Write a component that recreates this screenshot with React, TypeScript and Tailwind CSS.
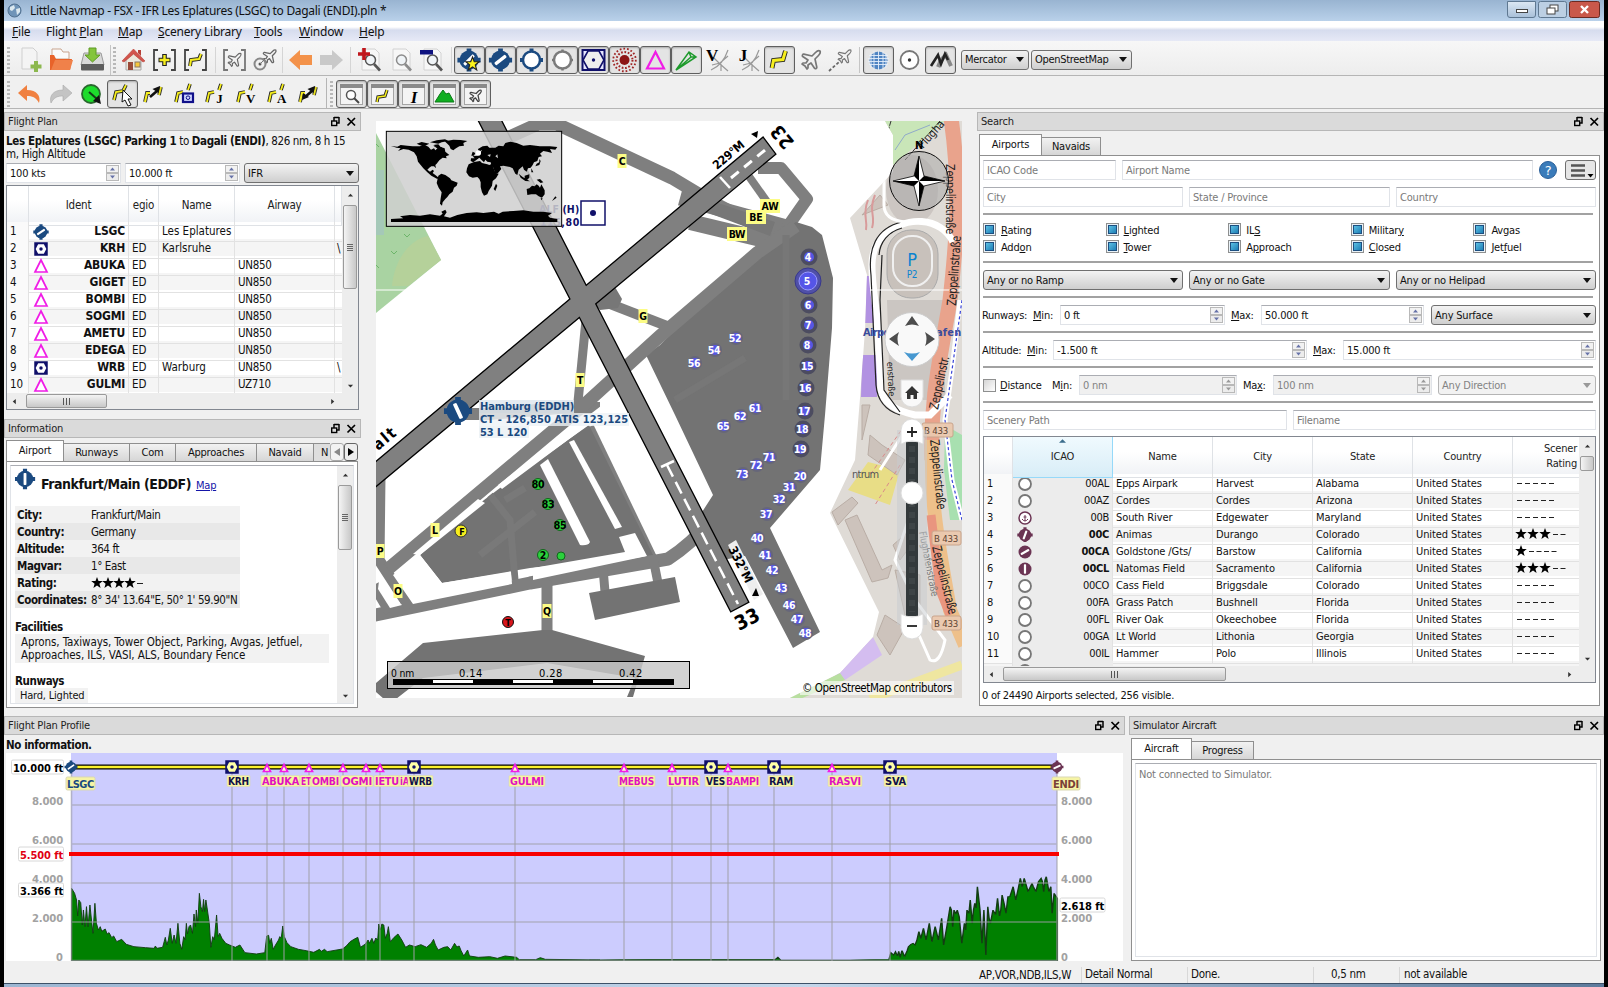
import React from "react";
import { Plane } from "lucide-react";

const BLUE = "#1b4a80";
const MAROON = "#6b3453";

/* ---------- symbols ---------- */

function AirportMark({ cx, cy, r, color = BLUE, angle = 45, ring = true }: { cx: number; cy: number; r: number; color?: string; angle?: number; ring?: boolean }) {
  return (
    <g transform={`translate(${cx} ${cy})`}>
      {ring && <path d={`M0 ${-r * 1.22}V${r * 1.22}M${-r * 1.22} 0H${r * 1.22}`} stroke={color} strokeWidth={r * 0.5} />}
      <circle r={r} fill={color} />
      <rect x={-r * 0.17} y={-r * 0.72} width={r * 0.34} height={r * 1.44} rx={r * 0.1} fill="#fff" transform={`rotate(${angle})`} />
    </g>
  );
}

function VorMark({ cx, cy, s = 13, fill = "#fff" }: { cx: number; cy: number; s?: number; fill?: string }) {
  return (
    <g transform={`translate(${cx} ${cy}) scale(${s / 14})`}>
      <rect x="-7" y="-7" width="14" height="14" fill="#10106a" />
      <path d="M-5.5 0L-3 -5H3L5.5 0L3 5H-3Z" fill={fill} />
      <circle r="1.8" fill="#10106a" />
    </g>
  );
}

function Tri({ cx, cy, s = 11, fill = "#fff" }: { cx: number; cy: number; s?: number; fill?: string }) {
  return <path d={`M${cx} ${cy - s / 2}L${cx + s / 2} ${cy + s / 2}H${cx - s / 2}Z`} fill={fill} stroke="#f01ce6" strokeWidth="1.7" />;
}

const Star = ({ cx, cy, r, fill = "#000", stroke = "none" }: { cx: number; cy: number; r: number; fill?: string; stroke?: string }) => (
  <path
    transform={`translate(${cx} ${cy}) scale(${r / 10})`}
    d="M0 -10L2.5 -3.3H9.6L4 1.2L6 8.4L0 4.3L-6 8.4L-4 1.2L-9.6 -3.3H-2.5Z"
    fill={fill}
    stroke={stroke}
    strokeWidth="1.6"
  />
);

/* ---------- toolbar ---------- */

function Tool({ on, children }: { on?: boolean; children: React.ReactNode }) {
  return (
    <div className={on ? "h-7 w-[31px] shrink-0 rounded-[3px] border border-[#5f5f5f] bg-[#e4e4e4] shadow-[inset_0_1px_2px_#aaa]" : "h-7 w-[31px] shrink-0 border border-transparent"}>
      <svg className="block h-[26px] w-[29px]" viewBox="0 0 29 26">{children}</svg>
    </div>
  );
}

const Handle = () => <div className="h-[26px] w-[3px] shrink-0 bg-[repeating-linear-gradient(#b8b8b8_0_2px,transparent_2px_4px)]" />;

const Page = () => <path d="M6 2H19L23 6V23H6Z" fill="#f7f7f7" stroke="#d2d2d2" />;

const Lens = ({ c = "#555" }: { c?: string }) => (
  <g>
    <circle cx="14.5" cy="13" r="5" fill="#eef3f6" fillOpacity=".8" stroke={c} strokeWidth="1.5" />
    <path d="M18 17L24 23.5" stroke={c} strokeWidth="2.6" />
  </g>
);

const Route = ({ d = "M7 21L9 12L18 10L21 4", w = 3 }: { d?: string; w?: number }) => (
  <g fill="none" strokeLinejoin="miter">
    <path d={d} stroke="#222" strokeWidth={w + 1.8} />
    <path d={d} stroke="#f6ee1e" strokeWidth={w} />
  </g>
);

const Brackets = ({ c = "#444" }: { c?: string }) => <path d="M8 3H4V23H8M21 3H25V23H21" fill="none" stroke={c} strokeWidth="1.8" />;

const WindowFrame = ({ children }: { children: React.ReactNode }) => (
  <g>
    <rect x="3.5" y="3.5" width="22" height="20" fill="#f4f4f4" stroke="#a5a5a5" />
    <rect x="3" y="3" width="23" height="4" fill="#8a8a8a" />
    {children}
  </g>
);

const DoubleArrow = ({ one }: { one?: boolean }) => (
  <g>
    <path d="M6 21L8 12H11" fill="none" stroke="#333" strokeWidth="3.800" />
    <path d="M6 21L8 12H11" fill="none" stroke="#f6ee1e" strokeWidth="2" />
    <path d="M20 14L22 6" stroke="#333" strokeWidth="3.600" />
    <path d="M20 14L22 6" stroke="#e8e01e" strokeWidth="1.800" />
    <path d="M11 16L18 10" stroke="#111" strokeWidth="2.600" />
    <path d="M21 5L19.500 12L13.500 8Z" fill="#111" />
    {!one && <path d="M8 19L9 12L15 16Z" fill="#111" />}
  </g>
);

const RouteLetter = ({ t }: { t: string }) => (
  <g>
    <Route d="M6 21L8 12L13 11" w={1.800} />
    <path d="M18 9L20 3" stroke="#222" strokeWidth="3.600" />
    <path d="M18 9L20 3" stroke="#f6ee1e" strokeWidth="1.800" />
    {t === "o" ? (
      <g>
        <rect x="13" y="12.500" width="10" height="8.500" fill="#cfd4ff" stroke="#10108a" strokeWidth="2.200" />
        <circle cx="18" cy="16.700" r="1.800" fill="none" stroke="#10108a" />
      </g>
    ) : (
      <text x="18.500" y="21.500" fontSize="13" fontWeight="bold" textAnchor="middle" fontFamily="Liberation Serif, serif">{t}</text>
    )}
  </g>
);

const Airways = ({ t }: { t: string }) => (
  <g>
    <path d="M8 23Q20 18 25 3M11 11L17 17L25 24M18 17V24M9 18L17 16L25 9" fill="none" stroke="#999" strokeWidth="1.200" />
    <text x="9" y="14" fontSize="17" fontWeight="bold" textAnchor="middle" fontFamily="Liberation Serif, serif">{t}</text>
  </g>
);

const OrangeArrow = ({ c, flip }: { c: string; flip?: boolean }) => (
  <path transform={flip ? "translate(29 0) scale(-1 1)" : undefined} d="M3 13L14 3V8H26V18H14V23Z" fill={c} />
);

function ToolbarTop() {
  return (
    <div className="flex h-[35px] shrink-0 items-center border-b border-[#b5b5b5] bg-gradient-to-b from-[#f7f7f7] to-[#ededed] pt-[3px] pl-[3px]">
      <Handle />
      <div className="w-[5px]" />
      <Tool><path d="M6 1H17L21 5V22H6Z" fill="#f4f4f4" stroke="#cfcfcf" /><path d="M20 14V25M14.500 19.500H25.500" stroke="#8cb84e" strokeWidth="4" /></Tool>
      <Tool><path d="M5 2H14L16 5H22V12H5Z" fill="#fafafa" stroke="#c9a58f" /><path d="M3 8V23H23L25 12H9L7 8Z" fill="#e8632a" /><path d="M8 13H26L23 23H4Z" fill="#f0814a" /></Tool>
      <Tool><path d="M6 6H23L26 18H3Z" fill="#d9d9d9" stroke="#999" /><rect x="3" y="17" width="23" height="6.500" rx="1" fill="#5d5d5d" /><path d="M11 1H18V8H22L14.500 15L7 8H11Z" fill="#84c53c" stroke="#5f9a25" /></Tool>
      <div className="h-[30px] w-[3px] border-r border-[#c5c5c5]" />
      <div className="w-[2px]" />
      <Handle />
      <div className="w-[2px]" />
      <Tool><path d="M7 13L14.500 6L22 13V23H7Z" fill="#ece7dc" stroke="#aaa" /><path d="M19 3H22V9L19 6Z" fill="#b84138" /><path d="M3 14L14.500 2L26 14L24 15L14.500 7L5 15Z" fill="#d2544c" stroke="#b84138" strokeWidth=".6" /><rect x="9" y="15" width="5" height="8" fill="#9a4a38" /><rect x="16" y="15" width="5" height="5" fill="#f6c63b" stroke="#876" /></Tool>
      <Tool><Brackets /><path d="M14.500 7V19M8.500 13H20.500" stroke="#222" strokeWidth="4.600" /><path d="M14.500 8V18M9.500 13H19.500" stroke="#f6ee1e" strokeWidth="2.400" /></Tool>
      <Tool><Brackets /><Route d="M9 19L10 13L18 12L20 7" w={2} /></Tool>
      <div className="mr-[3px] h-[26px] w-[5px] border-r border-[#d5d5d5]" />
      <Tool><Brackets c="#777" /><Plane x={6} y={4.500} size={17} strokeWidth={1.600} color="#666" /></Tool>
      <Tool><Plane x={10} y={1} size={17} strokeWidth={1.800} color="#666" /><circle cx="9" cy="17" r="5.500" fill="none" stroke="#888" strokeWidth="2" /><circle cx="9" cy="17" r="1.500" fill="#555" /><path d="M9 17L15 11" stroke="#777" /></Tool>
      <div className="mr-[2px] h-[26px] w-[2px] border-r border-[#d5d5d5]" />
      <Tool><OrangeArrow c="#f3924a" /></Tool>
      <Tool><OrangeArrow c="#c9c9c9" flip /></Tool>
      <div className="mr-[4px] h-[26px] w-[4px] border-r border-[#d5d5d5]" />
      <Tool><Page /><Lens /><path d="M8 1V13M2 7H14" stroke="#c0161c" strokeWidth="3.600" /></Tool>
      <Tool><Page /><Lens c="#8c8c8c" /></Tool>
      <Tool><Page /><Lens /><rect x="2" y="3" width="13" height="4.500" fill="#0e1280" /></Tool>
      <div className="mr-[2px] h-[26px] w-[4px] border-r border-[#d5d5d5]" />
      <Tool on><AirportMark cx={14} cy={13} r={9.500} angle={45} /><Star cx={17.500} cy={17} r={7} fill="#fdf41c" stroke="#222" /></Tool>
      <Tool on><AirportMark cx={14.500} cy={13} r={9.500} angle={52} /></Tool>
      <Tool on><path d="M14.500 1.500V24.500M3 13H26" stroke={BLUE} strokeWidth="4" /><circle cx="14.500" cy="13" r="8.500" fill="#fff" stroke={BLUE} strokeWidth="2.500" /></Tool>
      <Tool on><path d="M14.500 2.500V23.500M4 13H25" stroke="#777" strokeWidth="2.500" /><circle cx="14.500" cy="13" r="8.500" fill="#fff" stroke="#7b7b7b" strokeWidth="2.500" /></Tool>
      <Tool on><rect x="3.500" y="3" width="22" height="20" fill="#e7e7ff" stroke="#10106a" strokeWidth="2" /><path d="M4 13L9 4H20L25 13L20 22H9Z" fill="#eee" stroke="#10106a" strokeWidth="1.600" /><circle cx="14.500" cy="13" r="1.700" fill="#10106a" /></Tool>
      <Tool on><circle cx="14.500" cy="13" r="5" fill="#8d1616" /><circle cx="14.500" cy="13" r="8" fill="none" stroke="#a02525" strokeWidth="2" strokeDasharray="1.700 1.700" /><circle cx="14.500" cy="13" r="11.300" fill="none" stroke="#a02525" strokeWidth="1.800" strokeDasharray="1.700 2" /></Tool>
      <Tool on><path d="M14.500 5L23 21.500H6Z" fill="none" stroke="#f01ce6" strokeWidth="2.200" /></Tool>
      <Tool on><path d="M4 23L17 5L24 10ZM4 23L19 10M17 5L19 10L24 10" fill="none" stroke="#1e9a2c" strokeWidth="1.500" /></Tool>
      <Tool><Airways t="V" /></Tool>
      <Tool><Airways t="J" /></Tool>
      <Tool on><Route d="M7 21L8.500 13.500L18 12.500L20.500 4" w={3} /></Tool>
      <Tool><Plane x={3} y={1} size={24} strokeWidth={1.700} color="#777" /></Tool>
      <Tool><Plane x={9} y={1} size={17} strokeWidth={1.700} color="#777" /><path d="M2 24L12 15" stroke="#666" strokeWidth="1.800" strokeDasharray="3 2" /></Tool>
      <div className="mr-[3px] h-[26px] w-[3px] border-r border-[#c5c5c5]" />
      <Tool on><circle cx="14.500" cy="13.500" r="9" fill="#4f84c2" /><path d="M5 8.500H24M4 11.500H25M4 14.500H25M5 17.500H24M10 4V23M14.500 4V23M19 4V23M7 6V21M22 6V21" stroke="#e4eefa" strokeWidth=".9" /></Tool>
      <Tool><circle cx="14.500" cy="13" r="9" fill="#fff" stroke="#777" strokeWidth="1.800" /><circle cx="14.500" cy="13" r="1.700" fill="#333" /></Tool>
      <Tool on><path d="M12 20L15 13L20 8L25 19" fill="none" stroke="#888" strokeWidth="4" /><path d="M5 19L12 8L15 17L19 7L22 13" fill="none" stroke="#222" strokeWidth="2.600" /></Tool>
      <div className="w-[5px]" />
      <Combo label="Mercator" className="w-[68px]" tight />
      <Combo label="OpenStreetMap" className="ml-[2px] w-[101px]" tight />
    </div>
  );
}

function ToolbarBottom() {
  return (
    <div className="flex h-[33px] shrink-0 items-center border-b border-[#b5b5b5] bg-[#f0f0f0] pt-[3px] pl-[3px]">
      <Handle />
      <div className="w-1" />
      <Tool><path d="M3 12L12 4V9C22 9 26 15 24 22C21 16 17 15 12 15V20Z" fill="#f08040" /></Tool>
      <Tool><path d="M26 12L17 4V9C7 9 3 15 5 22C8 16 12 15 17 15V20Z" fill="#c4c4c4" stroke="#aaa" strokeWidth=".6" /></Tool>
      <Tool><circle cx="14" cy="13" r="9" fill="#1ddc2c" stroke="#2a682e" strokeWidth="1.800" /><path d="M12 11L20 18" stroke="#143c18" strokeWidth="2" /><path d="M24 23L16 20L22 14Z" fill="#111" /></Tool>
      <Tool on><Route d="M6 19L8 11L15 10L18 4" w={1.800} /><path d="M15 9L24 18L20 18L23 24L20 25L17 19L14 21Z" fill="#fff" stroke="#111" /></Tool>
      <Tool><DoubleArrow one /></Tool>
      <Tool><RouteLetter t="o" /></Tool>
      <Tool><RouteLetter t="J" /></Tool>
      <Tool><RouteLetter t="V" /></Tool>
      <Tool><RouteLetter t="A" /></Tool>
      <Tool><DoubleArrow /></Tool>
      <div className="mr-[3px] h-[31px] w-[3px] border-r border-[#b5b5b5]" />
      <Handle />
      <div className="w-[3px]" />
      <Tool on><WindowFrame><circle cx="14" cy="14" r="4.500" fill="#fff" stroke="#555" strokeWidth="1.500" /><path d="M17 17L22 22" stroke="#444" strokeWidth="2" /></WindowFrame></Tool>
      <Tool on><WindowFrame><Route d="M9 21L10 16L17 15L19 9" w={1.500} /></WindowFrame></Tool>
      <Tool on><WindowFrame><text x="15" y="22" fontSize="17" fontStyle="italic" fontWeight="bold" textAnchor="middle" fontFamily="Liberation Serif, serif">I</text></WindowFrame></Tool>
      <Tool on><WindowFrame><path d="M5 21L10 13L13 9L16 13L19 12L24 21Z" fill="#0fae20" stroke="#0c7a18" /></WindowFrame></Tool>
      <Tool on><WindowFrame><Plane x={7} y={7.500} size={15} strokeWidth={2} color="#444" /></WindowFrame></Tool>
    </div>
  );
}

/* ---------- form controls ---------- */

function Combo({ label, className, disabled, tight }: { label: string; className: string; disabled?: boolean; tight?: boolean }) {
  return (
    <div className={`flex h-5 shrink-0 items-center justify-between rounded-[3px] border pr-[4px] pl-[3px] ${disabled ? "border-[#b5b5b5] bg-[#f2f2f2] text-[#838383]" : "border-[#707070] bg-gradient-to-b from-[#f3f3f3] to-[#cfcfcf] text-[#111]"} ${className}`}>
      <span className={tight ? "tracking-[-0.3px]" : "pt-[2px]"}>{label}</span>
      <svg className="h-[5px] w-[8px] shrink-0" viewBox="0 0 8 5"><path d="M0 0H8L4 5Z" fill={disabled ? "#999" : "#111"} /></svg>
    </div>
  );
}

function Spin({ label, className, disabled }: { label: string; className: string; disabled?: boolean }) {
  const c = disabled ? "#999" : "#6672a8";
  return (
    <div className={`flex h-5 shrink-0 items-center justify-between border border-[#e0e3e8] border-t-[#abadb3] pr-px pl-[3px] ${disabled ? "bg-[#f0f0f0] text-[#838383]" : "bg-white"} ${className}`}>
      <span className="pt-[2px]">{label}</span>
      <svg className="h-4 w-[13px] shrink-0" viewBox="0 0 13 16">
        <rect x=".5" y=".5" width="12" height="7" fill="#f2f2f2" stroke="#b9b9b9" />
        <rect x=".5" y="8.500" width="12" height="7" fill="#ececec" stroke="#b9b9b9" />
        <path d="M4 5.500L6.500 2.500L9 5.500Z" fill={c} />
        <path d="M4 10.500L6.500 13.500L9 10.500Z" fill={c} />
      </svg>
    </div>
  );
}

const Field = ({ label, className }: { label: string; className: string }) => (
  <div className={`flex h-5 shrink-0 items-center border border-[#e0e3e8] border-t-[#abadb3] bg-white pt-[2px] pl-[3px] text-[#7a7a7a] ${className}`}>{label}</div>
);

const Rule = () => <div className="mt-[6px] mr-[3px] h-[2px] shrink-0 bg-[#a2a2a2]" />;

function DockTitle({ title }: { title: string }) {
  return (
    <div className="flex h-[19px] shrink-0 items-center justify-between border border-[#b7b7b7] bg-[#dadada] pr-[3px] pl-[3px]">
      <span className="pt-px text-[#222]">{title}</span>
      <svg className="h-[12px] w-[28px]" viewBox="0 0 28 12">
        <path d="M5 1.500H10M5 1V5M10 1V7H8" fill="none" stroke="#000" strokeWidth="1.500" />
        <rect x="2.700" y="5" width="5" height="4.500" fill="none" stroke="#000" strokeWidth="1.400" />
        <path d="M18.500 2L26 9.500M26 2L18.500 9.500" stroke="#000" strokeWidth="1.700" />
      </svg>
    </div>
  );
}

function Arrow({ dir }: { dir: "u" | "d" | "l" | "r" }) {
  const d = { u: "M1 5L4 2L7 5Z", d: "M1 2L4 5L7 2Z", l: "M5.5 1L2 4L5.5 7Z", r: "M2.5 1L6 4L2.5 7Z" }[dir];
  return <svg className="h-[7px] w-[7px] shrink-0" viewBox="0 0 8 8"><path d={d} fill="#333" /></svg>;
}

function VBar({ top, size }: { top: string; size: string }) {
  return (
    <div className="flex w-[16px] shrink-0 flex-col items-center bg-[#ededed] pt-[6px] pb-[3px]">
      <Arrow dir="u" />
      <div className={`flex w-[14px] shrink-0 flex-col items-center justify-center gap-[1px] rounded-[2px] border border-[#9a9a9a] bg-gradient-to-r from-[#f4f4f4] to-[#c8c8c8] ${top} ${size}`}>
        {size !== "h-[15px]" && [0, 1, 2, 3].map((i) => <div key={i} className="h-px w-[6px] bg-[#666]" />)}
      </div>
      <div className="flex-1" />
      <Arrow dir="d" />
    </div>
  );
}

function HBar({ size }: { size: string }) {
  return (
    <div className="flex h-[16px] shrink-0 items-center bg-[#ededed] pl-[4px]">
      <Arrow dir="l" />
      <div className={`ml-[8px] flex h-[14px] items-center justify-center gap-[2px] rounded-[2px] border border-[#9a9a9a] bg-gradient-to-b from-[#f4f4f4] to-[#c8c8c8] ${size}`}>
        {[0, 1, 2].map((i) => <div key={i} className="h-[7px] w-px bg-[#555]" />)}
      </div>
      <div className="flex-1" />
      <Arrow dir="r" />
      <div className="w-[22px]" />
    </div>
  );
}

/* ---------- flight plan ---------- */

const plan = [
  ["a", "LSGC", "", "Les Eplatures", ""],
  ["v", "KRH", "ED", "Karlsruhe", ""],
  ["t", "ABUKA", "ED", "", "UN850"],
  ["t", "GIGET", "ED", "", "UN850"],
  ["t", "BOMBI", "ED", "", "UN850"],
  ["t", "SOGMI", "ED", "", "UN850"],
  ["t", "AMETU", "ED", "", "UN850"],
  ["t", "EDEGA", "ED", "", "UN850"],
  ["v", "WRB", "ED", "Warburg", "UN850"],
  ["t", "GULMI", "ED", "", "UZ710"],
];

const planCols = "grid grid-cols-[22px_100px_30px_76px_100px_7px]";

function FlightPlan() {
  return (
    <section className="flex h-[301px] flex-col">
      <DockTitle title="Flight Plan" />
      <div className="h-[32px] overflow-hidden pt-[4px] pl-[2px] text-[11.500px] leading-[13px]">
        <div className="tracking-[-0.36px] whitespace-nowrap"><b>Les Eplatures (LSGC) Parking 1</b> to <b>Dagali (ENDI)</b>, 826 nm, 8 h 15</div>
        <div className="tracking-[-0.3px]">m, High Altitude</div>
      </div>
      <div className="flex gap-[4px] pl-[2px]">
        <Spin label="100 kts" className="w-[115px]" />
        <Spin label="10.000 ft" className="w-[115px]" />
        <Combo label="IFR" className="w-[115px]" />
      </div>
      <div className="mt-[2px] ml-[2px] flex h-[225px] w-[353px] flex-col border border-[#828790] bg-white">
        <div className="flex min-h-0 flex-1">
          <div className="w-[335px] overflow-hidden">
            <div className={`${planCols} h-[36px] bg-gradient-to-b from-white from-40% to-[#f1f3f6] text-center text-[11.500px] leading-[39px] text-[#222]`}>
              {["", "Ident", "egio", "Name", "Airway", ""].map((h, i) => <div key={i} className="border-r border-b border-[#dfe2e6]">{h}</div>)}
            </div>
            {plan.map((r, i) => (
              <div key={r[1]} className={`${planCols} h-[17px] text-[11.500px] leading-[19px] tracking-[0px] ${i % 2 ? "bg-[#f5f5f5]" : "bg-white"}`}>
                <div className="border-r border-b border-[#e2e2e2] bg-[#fafafa] pl-[3px]">{i + 1}</div>
                <div className="flex items-center justify-between border-r border-b border-[#e2e2e2] pr-[3px] pl-[4px]">
                  <svg className="h-[16px] w-[16px]" viewBox="-8 -8 16 16">
                    {r[0] === "a" ? <AirportMark cx={0} cy={0} r={6.300} angle={55} /> : r[0] === "v" ? <VorMark cx={0} cy={0} s={13.500} /> : <Tri cx={0} cy={0} s={12} />}
                  </svg>
                  <b className="text-[12px] leading-[15px] tracking-[-0.2px]">{r[1]}</b>
                </div>
                <div className="border-r border-b border-[#e2e2e2] pl-[3px]">{r[2]}</div>
                <div className="border-r border-b border-[#e2e2e2] pl-[3px] whitespace-nowrap">{r[3]}</div>
                <div className="border-r border-b border-[#e2e2e2] pl-[3px] tracking-[-0.3px]">{r[4]}</div>
                <div className="overflow-hidden border-b border-[#e2e2e2] pl-[2px]">{r[0] === "v" ? "\\" : ""}</div>
              </div>
            ))}
          </div>
          <VBar top="mt-[6px]" size="h-[84px]" />
        </div>
        <HBar size="w-[81px]" />
      </div>
    </section>
  );
}

/* ---------- information ---------- */

const Stars = ({ n, total = 5, size = 11 }: { n: number; total?: number; size?: number }) => (
  <svg className="h-[13px] w-[62px]" viewBox="0 0 62 13">
    {Array.from({ length: n }, (_, i) => <Star key={i} cx={6 + i * size} cy={7} r={6} />)}
    {Array.from({ length: total - n }, (_, i) => {
      const x = n * size + (size > 10 ? 2 : 1) + i * (n === 0 ? 8 : 7.500);
      return <path key={i} d={`M${x} 7.500H${x + (n === 4 ? 6 : 5)}`} stroke="#222" />;
    })}
  </svg>
);

const facts: [string, React.ReactNode][] = [
  ["City:", "Frankfurt/Main"],
  ["Country:", "Germany"],
  ["Altitude:", "364 ft"],
  ["Magvar:", "1° East"],
  ["Rating:", <Stars key="s" n={4} />],
  ["Coordinates:", "8° 34' 13.64\"E, 50° 1' 59.90\"N"],
];

function Tab({ label, className, active }: { label: string; className: string; active?: boolean }) {
  return (
    <div className={`shrink-0 overflow-hidden border border-b-0 border-[#8f8f8f] text-center whitespace-nowrap ${active ? "h-[21px] bg-white leading-[20px]" : "h-[18px] bg-gradient-to-b from-[#f2f2f2] to-[#d6d6d6] leading-[17px]"} ${className}`}>{label}</div>
  );
}

function Information() {
  return (
    <section className="mt-[6px] flex h-[289px] flex-col">
      <DockTitle title="Information" />
      <div className="mt-[2px] ml-[2px] flex w-[353px] items-end">
        <Tab label="Airport" className="w-[58px]" active />
        <Tab label="Runways" className="w-[66px] border-l-0" />
        <Tab label="Com" className="w-[46px] border-l-0" />
        <Tab label="Approaches" className="w-[81px] border-l-0" />
        <Tab label="Navaid" className="w-[57px] border-l-0" />
        <div className="h-[18px] w-[16px] shrink-0 border-t border-[#8f8f8f] bg-[#dedede] pl-[7px] leading-[17px]">N</div>
        <div className="flex h-[18px] w-[14px] shrink-0 items-center justify-center rounded-[3px] border border-[#aaa] bg-[#f2f2f2]"><svg className="h-[8px] w-[6px]" viewBox="0 0 6 8"><path d="M6 0V8L0 4Z" fill="#888" /></svg></div>
        <div className="flex h-[18px] w-[14px] shrink-0 items-center justify-center rounded-[3px] border border-[#666] bg-[#eee]"><svg className="h-[8px] w-[6px]" viewBox="0 0 6 8"><path d="M0 0V8L6 4Z" fill="#000" /></svg></div>
      </div>
      <div className="ml-[2px] h-[247px] w-[352px] border border-[#8f8f8f] bg-white p-[3px]">
        <div className="flex h-[239px] border border-[#e0e3e8] border-t-[#abadb3]">
          <div className="flex-1 overflow-hidden pl-[4px]">
            <div className="flex h-[40px] pt-[2px]">
              <svg className="h-[22px] w-[22px] shrink-0" viewBox="-11 -11 22 22"><AirportMark cx={-1} cy={0} r={8.300} angle={0} /></svg>
              <div className="pt-[9px] pl-[4px] text-[14px] font-bold tracking-[-0.45px] whitespace-nowrap">Frankfurt/Main (EDDF)</div>
              <div className="pt-[11px] pl-[5px] text-[#1515a8] underline">Map</div>
            </div>
            <div className="w-[225px]">
              {facts.map(([k, v], i) => (
                <div key={k} className={`flex h-[17px] items-center pl-[2px] whitespace-nowrap ${i % 2 ? "bg-[#e8e8e8]" : "bg-[#f2f2f2]"}`}>
                  <b className="w-[74px] text-[11.500px] tracking-[-0.4px]">{k}</b>
                  <span className="text-[11.500px] tracking-[-0.4px]">{v}</span>
                </div>
              ))}
            </div>
            <b className="mt-[12px] block h-[14px] text-[11.500px] leading-[14px] tracking-[-0.4px]">Facilities</b>
            <div className="w-[314px] bg-[#f2f2f2] pt-[2px] pb-[1px] pl-[6px] text-[11.500px] leading-[13px] tracking-[-0.1px] whitespace-nowrap">
              <div>Aprons, Taxiways, Tower Object, Parking, Avgas, Jetfuel,</div>
              <div>Approaches, ILS, VASI, ALS, Boundary Fence</div>
            </div>
            <b className="mt-[12px] block h-[13px] text-[11.500px] leading-[13px] tracking-[-0.4px]">Runways</b>
            <div className="w-[73px] bg-[#f2f2f2] pl-[5px] leading-[16px] whitespace-nowrap">Hard, Lighted</div>
          </div>
          <VBar top="mt-[6px]" size="h-[65px]" />
        </div>
      </div>
    </section>
  );
}

/* ---------- map ---------- */

const stands: [number, number, string][] = [
  [808, 257, "4"], [808, 305, "6"], [808, 325, "7"], [807, 345, "8"], [807, 366, "15"], [805, 388, "16"], [804, 411, "17"], [802, 429, "18"], [800, 449, "19"],
  [800, 476, "20"], [789, 487, "31"], [779, 499, "32"], [766, 514, "37"], [757, 538, "40"], [765, 555, "41"], [772, 570, "42"], [781, 588, "43"], [789, 605, "46"], [797, 619, "47"], [805, 633, "48"],
  [735, 338, "52"], [714, 350, "54"], [694, 363, "56"], [755, 408, "61"], [740, 416, "62"], [723, 426, "65"], [769, 457, "71"], [756, 465, "72"], [742, 474, "73"],
];

const labels: [number, number, string][] = [
  [622, 161, "C"], [643, 316, "G"], [580, 380, "T"], [770, 206, "AW"], [756, 217, "BE"], [737, 234, "BW"], [435, 530, "L"], [380, 551, "P"], [398, 591, "O"], [547, 611, "Q"],
];

function WorldInset() {
  return (
    <g transform="translate(370 115) scale(.33333)">
      <rect x="49" y="49" width="526" height="285" fill="#cfcfcf" fillOpacity=".86" stroke="#000" strokeWidth="3" />
      <g fill="#000">
        <path d="M63 93L82 95L92 90L112 92L128 94L150 94L160 88L175 95L183 104L192 100L196 106L204 98L190 90L205 88L212 96L224 100L226 110L238 120L228 124L230 130L218 128L208 136L200 146L196 150L198 160L192 154L184 154L178 158L172 164L180 170L188 164L192 168L188 174L196 180L206 188L202 192L184 182L172 172L160 160L152 150L144 140L140 124L132 112L116 104L100 102L84 108L92 100L80 98Z" />
        <path d="M140 86L155 81L178 86L165 92L150 91ZM180 82L200 76L225 73L236 78L215 82L205 86ZM190 92L215 97L222 108L208 104Z" />
        <path d="M224 79L250 74L272 75L292 78L280 84L282 92L268 94L258 100L250 106L242 102L238 92L232 86Z" />
        <path d="M205 182L214 176L226 180L240 190L244 196L263 203L260 212L252 218L248 230L238 238L232 246L226 252L218 262L216 272L210 266L212 250L215 232L206 218L200 204Z" />
        <path d="M296 148L312 141L330 138L336 144L352 148L358 150L366 146L374 168L378 174L386 176L378 190L368 198L366 212L356 228L352 238L342 242L336 232L332 216L332 202L328 192L322 186L308 188L297 184L289 172L291 160Z" />
        <path d="M378 206L382 212L376 228L371 222Z" />
        <path d="M302 138L303 130L314 130L308 124L322 122L330 116L336 104L326 112L324 102L338 94L352 92L358 98L376 98L386 92L400 94L406 84L422 80L440 84L460 92L480 90L510 94L540 94L562 96L556 104L540 102L546 114L532 110L520 108L510 116L516 124L506 126L502 138L492 142L488 150L482 158L474 160L470 170L462 164L458 154L446 164L442 180L436 176L428 160L420 156L400 152L390 154L394 162L384 174L376 176L370 158L364 150L362 142L352 140L346 134L342 142L334 134L328 128L318 136L310 142Z" />
        <path d="M308 110L316 114L312 122L304 122ZM348 92L352 110L346 116L336 110Z" />
        <path d="M446 176L458 186L472 194L480 199L466 198L452 188ZM464 182L478 178L478 188L470 196L464 190ZM500 194L510 192L520 202L512 204ZM484 160L490 172L484 172ZM496 154L500 146L508 142L508 132L512 138L508 150Z" />
        <path d="M470 222L478 220L486 212L494 214L500 208L506 212L510 218L514 208L524 226L524 238L516 248L506 244L498 238L484 238L472 240ZM512 250L518 250L514 256ZM556 244L560 248L546 258Z" />
        <path d="M63 312L100 310L90 304L120 300L150 302L180 298L210 302L218 296L214 290L226 284L230 292L222 304L240 308L262 300L290 294L320 292L340 294L372 290L386 296L398 290L430 288L460 286L490 290L520 290L546 294L534 302L540 308L562 312V321H63Z" />
      </g>
      <circle cx="325" cy="114" r="8" fill="#fff" />
      <path d="M352 120L362 118L360 126ZM376 124L382 118L384 130Z" fill="#cfcfcf" />
    </g>
  );
}

function AirportMap() {
  return (
    <svg className="block h-[577px] w-[586px]" viewBox="376 121 586 577" fontFamily="'DejaVu Sans Condensed','DejaVu Sans',sans-serif">
      <rect x="376" y="121" width="586" height="577" fill="#fff" />
      {/* parkland */}
      <path d="M376 133L441 260L376 313Z" fill="#a9d3a2" />
      <path d="M392 286C394 262 408 240 428 236L441 260L408 286Z" fill="#b5d19a" />
      <path d="M376 170H384V235H376Z" fill="#a5c8b8" />
      <path d="M376 290H412" stroke="#fff" />
      <path d="M391 251l3 3l3 -3M404 234l3 3l3 -3M376 265l3 3M376 144l3 3" stroke="#6db56a" fill="none" />
      {/* taxiways and aprons */}
      <g fill="none" stroke="#7f7f7f" strokeLinejoin="round">
        <path d="M505 139L538 124H557L672 178L712 202L785 240" strokeWidth="13" />
        <path d="M680 198L790 228" strokeWidth="15" />
        <path d="M690 222L790 246" strokeWidth="16" />
        <path d="M758 168H781L807 199L786 229" strokeWidth="12" />
        <path d="M748 175L770 206" strokeWidth="8" />
        <path d="M600 300L672 328" strokeWidth="10" />
        <path d="M586 320L577 412" strokeWidth="9" />
        <path d="M370 616L530 583L668 559Q690 545 712 520L740 490" strokeWidth="13" />
        <path d="M547 585V640" strokeWidth="11" strokeLinecap="round" />
        <path d="M603 568L605 592M653 558L658 583" strokeWidth="9" strokeLinecap="round" />
        <path d="M380 477L379 560L410 608M374 585L390 612" strokeWidth="11" />
        <path d="M589 427L653 560" strokeWidth="10" />
        <path d="M460 414H490L560 408H600" strokeWidth="12" />
      </g>
      <path d="M718 203L775 222L770 236L706 212Z" fill="#777" />
      <path d="M615 287L622 299L618 308L600 310L594 303Z" fill="#777" />
      <path d="M755 247L796 222L812 227L822 235L833 278L832 328L825 415L820 470L770 528L820 632L793 648L745 556L722 560L700 530L695 523L713 495L675 415L646 355L660 345Z" fill="#737373" />
      <path d="M796 226L757 253L660 336L585 404L388 569" fill="none" stroke="#7f7f7f" strokeWidth="13" />
      <path d="M786 235V400M675 400L745 358" fill="none" stroke="#777" strokeWidth="7" />
      <path d="M420 555L484 500L500 488L589 425L653 555L530 568L442 583Z" fill="#737373" />
      <path d="M490 495L510 520L515 580M480 555L535 512M505 500L525 488" fill="none" stroke="#797979" strokeWidth="7" />
      <g fill="#fff">
        <path d="M498 485L502 489L600 416L628 402L614 396Z" />
        <path d="M540 465L548 459L590 542Q588 546 580 545Z" />
        <path d="M569 442L574 440L622 527L615 529Z" />
        <path d="M393 575L420 555L442 583L511 572L512 584L413 604Z" />
        <path d="M478 499L485 503L420 555L413 554Z" />
        <path d="M533 568L625 552L619 537L635 533L647 556L533 580Z" />
        <path d="M379 581L402 605L390 608L378 589Z" />
      </g>
      <path d="M589 593L675 577L680 602L595 620Z" fill="#737373" />
      <path d="M376 683L423 643L543 630H552L645 656L633 697H627L635 678L547 663L423 678L396 699H384L376 692Z" fill="#737373" />
      {/* runways */}
      <g stroke="#000" strokeWidth="2.600" fill="#808080">
        <path d="M763 138L775 154L366 494L356 479Z" />
        <path d="M474 111L496 111L748 602L731 611Z" />
      </g>
      <path d="M763 138L775 154L366 494L356 479ZM474 111L496 111L748 602L731 611Z" fill="#808080" />
      <path d="M720 177L730 188" stroke="#fff" strokeWidth="2.500" />
      <path d="M731 178L770 146" stroke="#fff" strokeWidth="3" strokeDasharray="10 7" />
      <path d="M661 467L674 461" stroke="#fff" strokeWidth="2.500" />
      <path d="M667 465L738 604" stroke="#fff" strokeWidth="2.500" strokeDasharray="13 6" />
      {/* city area */}
      <clipPath id="city"><path d="M885 121L893 135V172L850 218L867 275L865 330L860 398L855 460L830 513L879 612L873 637L840 673L788 699H962V121Z" /></clipPath>
      <g clipPath="url(#city)">
        <rect x="780" y="121" width="182" height="578" fill="#dfdbd6" />
        <path d="M885 121H945L893 165Z" fill="#c9e6b8" />
        <path d="M895 150L905 135L930 125" fill="none" stroke="#8fa9c9" />
        <path d="M866 276H875V323H865ZM862 355H877V397H861Z" fill="#b292e2" />
        <path d="M873 637L882 655L845 680L835 676Z" fill="#d4bdf0" />
        <path d="M840 673L845 680L800 699H785Z" fill="#b8dfa0" />
        <path d="M868 462L900 470L890 505L848 490Z" fill="#e8dd86" />
        <path d="M945 425L962 435V520H950L944 470Z" fill="#a8e0b0" />
        <g fill="#cdc3bc" stroke="#b9ada5">
          <path d="M870 435L882 445L905 460L897 475L868 455Z" />
          <path d="M845 520L857 515L882 570L892 565L888 578L872 582Z" />
          <path d="M832 512L852 497L858 503L838 525Z" />
          <path d="M877 635L885 615L905 628L890 655Z" />
          <path d="M893 545L910 530L915 540L900 560Z" />
          <path d="M862 215L880 195L888 205Z" />
          <path d="M862 405L870 405L862 440Z" />
          <path d="M895 570L920 575V605L905 615Z" />
        </g>
        <path d="M887 300H945V400H890Z" fill="#cbc6c2" />
        <ellipse cx="912" cy="190" rx="26" ry="35" fill="#ccc6c2" />
        <rect x="887" y="230" width="51" height="68" rx="24" fill="#c8c1bb" stroke="#aaa" />
        <rect x="893" y="236" width="39" height="50" rx="19" fill="none" stroke="#f0f0f0" strokeWidth="2" />
        <path d="M951 118C960 180 958 230 950 300C940 360 930 400 932 460" fill="none" stroke="#e9a38c" strokeWidth="15" />
        <path d="M932 440C930 510 940 550 950 610L965 645" fill="none" stroke="#eec08a" strokeWidth="14" />
        <path d="M931 515L940 590L950 615" fill="none" stroke="#e9957f" strokeWidth="9" />
        <path d="M953 242C942 218 905 212 880 240C865 255 875 290 878 330L881 390Q884 408 915 415H930Q945 400 950 395" fill="none" stroke="#fff" strokeWidth="7" />
        <path d="M902 222C875 228 868 250 871 275L876 385Q878 408 900 415M882 255L880 300L884 390L900 412M902 228C888 232 880 242 879 255" fill="none" stroke="#222" strokeWidth="1.200" />
        <path d="M884 172V205Q884 220 905 222M912 420L880 470M915 500L895 560L915 600L945 640Q940 665 930 660L908 610" fill="none" stroke="#fff" strokeWidth="3" />
        <path d="M960 300L952 370L945 420L952 480L962 520" fill="none" stroke="#fff" strokeWidth="5" />
        <path d="M962 300L952 370L945 420L952 480L962 520" fill="none" stroke="#3b46d8" strokeWidth="1.200" strokeDasharray="3 2.500" />
        <path d="M905 425L870 475M900 465L875 505" stroke="#d98a8a" strokeWidth="1" strokeDasharray="4 3" />
        <path d="M868 200C862 215 868 220 866 230M875 195C868 212 876 215 872 228" fill="none" stroke="#d89b9b" strokeWidth="2" />
        <path d="M870 699L962 665" stroke="#efe6a0" strokeWidth="9" />
        <path d="M870 290H962" stroke="#fff" />
        <path d="M891 121L875 175M940 121L905 160" stroke="#333" strokeWidth="1" strokeDasharray="5 1" />
      </g>
      <g fontSize="13" fill="#222">
        <text transform="translate(946 164) rotate(90)" textLength="70" lengthAdjust="spacingAndGlyphs">Zeppelinstraße</text>
        <text transform="translate(956 306) rotate(-86)" textLength="70" lengthAdjust="spacingAndGlyphs">Zeppelinstraße</text>
        <text transform="translate(938 410) rotate(-78)" textLength="54" lengthAdjust="spacingAndGlyphs">Zeppelinstr.</text>
        <text transform="translate(930 440) rotate(84)" textLength="70" lengthAdjust="spacingAndGlyphs">Zeppelinstraße</text>
        <text transform="translate(932 547) rotate(76)" textLength="70" lengthAdjust="spacingAndGlyphs">Zeppelinstraße</text>
        <text transform="translate(887 362) rotate(87)" fontSize="9">enstraße</text>
        <text transform="translate(919 532) rotate(79)" fontSize="10" fill="#777" textLength="66" lengthAdjust="spacingAndGlyphs">Flughafenstraße</text>
        <text transform="translate(923 149) rotate(-48)" fontSize="11" textLength="33" lengthAdjust="spacingAndGlyphs">Flugha</text>
        <text x="852" y="478" fontSize="11" fill="#555" textLength="27">ntrum</text>
      </g>
      <g fontSize="11" fontWeight="bold" fill="#3a4c9c">
        <text x="863" y="336" textLength="27">Airpo</text>
        <text x="936" y="336" textLength="25">afen</text>
      </g>
      <g fill="#0b83cf" textAnchor="middle"><text x="912" y="266" fontSize="18">P</text><text x="912" y="278" fontSize="10">P2</text></g>
      {[[930, 430], [940, 538], [940, 623]].map(([x, y]) => (
        <g key={y}>
          <rect x={x - 8} y={y - 7} width={x === 930 ? 31 : 29} height="14" rx="2" fill="#eac8ae" fillOpacity=".95" stroke="#c9a48c" />
          <text x={x - 6} y={y + 4} fontSize="9.500" fill="#5d4432" textLength="24" lengthAdjust="spacingAndGlyphs">B 433</text>
        </g>
      ))}
      {/* parking stands */}
      <g fontSize="10.500" fontWeight="bold" textAnchor="middle">
        <circle cx="808" cy="281" r="13" fill="#5050a8" stroke="#38388c" />
        <circle cx="808" cy="281" r="9" fill="#5555e8" stroke="#9999ff" />
        <text x="807" y="285" fill="#fff">5</text>
        {stands.map(([x, y, t], i) => (
          <g key={t}>
            {i < 9 ? <circle cx={x + 1} cy={y} r="8.500" fill="#4c4c60" /> : <circle cx={x + 1} cy={y} r="7" fill="#66667a" />}
            <circle cx={x + 1} cy={y} r="5" fill="#5656e4" />
            <text x={x} y={y + 4} fill="#fff">{t}</text>
          </g>
        ))}
        {[[538, 484, "80"], [548, 504, "83"], [560, 525, "85"], [543, 555, "2"], [561, 556, ""]].map(([x, y, t]) => (
          <g key={String(x)}>
            <circle cx={x} cy={y} r={t ? 5.500 : 4} fill="#2bd03c" stroke="#12661c" />
            <text x={x} y={Number(y) + 4}>{t}</text>
          </g>
        ))}
        <circle cx="461" cy="531" r="6" fill="#f6ee1e" stroke="#333" /><text x="462" y="535" fontSize="9">F</text>
        <circle cx="508" cy="622" r="5.500" fill="#d8151b" stroke="#111" /><text x="508" y="626" fontSize="9">T</text>
        {labels.map(([x, y, t]) => (
          <g key={t}>
            <rect x={x - (t.length > 1 ? 10 : 4.500)} y={y - 7} width={t.length > 1 ? 20 : 9} height="14" fill="#fcfc86" />
            <text x={x} y={y + 4}>{t}</text>
          </g>
        ))}
      </g>
      <g fontWeight="bold">
        <text x="539" y="213" fontSize="10.500" fill="#10106a" textLength="40">ALF (H)</text>
        <text x="540" y="226" fontSize="10.500" fill="#10106a" textLength="39">115,80</text>
        <rect x="581" y="201" width="24" height="24" fill="#fff" stroke="#10106a" strokeWidth="1.500" />
        <circle cx="593" cy="213" r="3" fill="#10106a" />
        <text transform="translate(717 170) rotate(-40)" fontSize="12" textLength="37">229°M</text>
        <path d="M751 134L758 131L757 138Z" />
        <text transform="translate(795 142) rotate(230)" fontSize="19" textLength="24">23</text>
        <path d="M728 545L736 540L763 594L754 600Z" fill="#eee" />
        <text transform="translate(728 549) rotate(63)" fontSize="12.500" textLength="39">332°M</text>
        <path d="M752 596L756 588L759 596Z" />
        <text transform="translate(739 631) rotate(-27)" fontSize="20" textLength="25">33</text>
        <text transform="translate(378 451) rotate(-40)" fontSize="16" textLength="25">alt</text>
        <AirportMark cx={458} cy={411} r={11.500} angle={-25} />
        <g fontSize="11" fill={BLUE}>
          <rect x="479" y="400" width="95" height="13" fill="#dfe8ee" fillOpacity=".85" />
          <rect x="479" y="413" width="150" height="13" fill="#eef3f6" fillOpacity=".8" />
          <rect x="479" y="426" width="50" height="12" fill="#eef3f6" />
          <text x="480" y="410" textLength="94">Hamburg (EDDH)</text>
          <text x="480" y="423" textLength="148">CT - 126,850 ATIS 123,125</text>
          <text x="480" y="436" textLength="47">53 L 120</text>
        </g>
      </g>
      <WorldInset />
      {/* scale */}
      <rect x="387.500" y="661.500" width="302" height="27" fill="#c8c8c8" fillOpacity=".82" stroke="#000" />
      <g fontSize="11">
        <text x="391" y="677" textLength="23" lengthAdjust="spacingAndGlyphs">0 nm</text><text x="459" y="677" textLength="23">0.14</text><text x="539" y="677" textLength="23">0.28</text><text x="619" y="677" textLength="23">0.42</text>
      </g>
      <rect x="393" y="679" width="281" height="6" fill="#000" />
      <path d="M433 681.500H473M513 681.500H553M593 681.500H633" stroke="#fff" strokeWidth="3" />
      <rect x="800" y="681" width="154" height="14" fill="#fff" fillOpacity=".6" />
      <text x="802" y="692" fontSize="11.500" textLength="150">© OpenStreetMap contributors</text>
      {/* compass */}
      <circle cx="919" cy="181" r="29.500" fill="#aaa" fillOpacity=".55" stroke="#111" />
      <path d="M919 156L924 176L945 181L924 186L919 206L914 186L893 181L914 176Z" fill="#fff" stroke="#000" strokeWidth=".8" />
      <path d="M919 156V181L914 176ZM945 181H919L924 176ZM919 206V181L924 186ZM893 181H919L914 186Z" />
      <text x="919" y="149" fontSize="11" fontWeight="bold" textAnchor="middle">N</text>
      {/* navigation controls */}
      <rect x="897" y="430" width="30" height="195" fill="#c8ccd0" fillOpacity=".5" />
      <circle cx="912" cy="339.500" r="27" fill="#f9f9f9" stroke="#ccc" />
      <path d="M912 316L919 326Q912 323 905 326ZM889 339L899 332Q896 339 899 346ZM935 339L925 332Q928 339 925 346Z" fill="#4d4d4d" />
      <path d="M912 361L904 352Q912 355 920 352Z" fill="#4798d0" />
      <path d="M901 380H923V397Q922 406 912 407Q902 406 901 397Z" fill="#f9f9f9" stroke="#ddd" />
      <path d="M905 393L912 386L919 393H917V399H913.500V395H910.500V399H907V393Z" fill="#333" />
      <rect x="906" y="442" width="12" height="174" fill="#33393b" />
      <path d="M912 446V612" stroke="#3e4446" strokeWidth="6" strokeDasharray="6 5" />
      <path d="M901 444V430Q902 420 912 419Q922 420 923 430V444Q912 438 901 444Z" fill="#fff" stroke="#ddd" />
      <path d="M907 432H917M912 427V437" stroke="#222" strokeWidth="1.800" />
      <circle cx="912" cy="493" r="11" fill="#fff" stroke="#ddd" />
      <path d="M901 614Q912 620 923 614V628Q922 638 912 639Q902 638 901 628Z" fill="#fff" stroke="#ddd" />
      <path d="M907 626H917" stroke="#222" strokeWidth="1.800" />
    </svg>
  );
}

/* ---------- search ---------- */

const airports: [string, string, string, string, string, number][] = [
  ["o", "00AL", "Epps Airpark", "Harvest", "Alabama", 0],
  ["o", "00AZ", "Cordes", "Cordes", "Arizona", 0],
  ["w", "00B", "South River", "Edgewater", "Maryland", 0],
  ["f", "00C", "Animas", "Durango", "Colorado", 3],
  ["g", "00CA", "Goldstone /Gts/", "Barstow", "California", 1],
  ["h", "00CL", "Natomas Field", "Sacramento", "California", 3],
  ["o", "00CO", "Cass Field", "Briggsdale", "Colorado", 0],
  ["o", "00FA", "Grass Patch", "Bushnell", "Florida", 0],
  ["o", "00FL", "River Oak", "Okeechobee", "Florida", 0],
  ["o", "00GA", "Lt World", "Lithonia", "Georgia", 0],
  ["o", "00IL", "Hammer", "Polo", "Illinois", 0],
];

const airportCols = "grid grid-cols-[29px_100px_100px_100px_100px_100px_66px]";

function AirportIcon({ kind }: { kind: string }) {
  return (
    <svg className="h-[16px] w-[16px]" viewBox="-8 -8 16 16">
      {kind === "o" && <circle r="6" fill="#fff" stroke="#777" strokeWidth="1.800" />}
      {kind === "w" && <g fill="none" stroke={MAROON}><circle r="6" fill="#fff" strokeWidth="1.500" /><path d="M0 -3V3M-3 1Q0 5 3 1M-1.500 -1H1.500" /></g>}
      {kind === "f" && <AirportMark cx={0} cy={0} r={6.300} color={MAROON} angle={20} />}
      {kind === "g" && <AirportMark cx={0} cy={0} r={6.500} color={MAROON} angle={60} ring={false} />}
      {kind === "h" && <AirportMark cx={0} cy={0} r={6.500} color={MAROON} angle={0} ring={false} />}
    </svg>
  );
}

const checks: [string, string, string][][] = [
  [["", "R", "ating"], ["", "L", "ighted"], ["IL", "S", ""], ["Militar", "y", ""], ["Av", "g", "as"]],
  [["Add", "o", "n"], ["", "T", "ower"], ["A", "p", "proach"], ["", "C", "losed"], ["Jet", "f", "uel"]],
];

const U = ({ k, rest, className = "" }: { k: string; rest: string; className?: string }) => (
  <span className={`shrink-0 pt-[2px] whitespace-nowrap ${className}`}><u>{k}</u>{rest}</span>
);

function Search() {
  return (
    <section className="flex h-[599px] w-[627px] flex-col pt-[3px]">
      <DockTitle title="Search" />
      <div className="mt-[3px] ml-[2px] flex items-end">
        <Tab label="Airports" className="w-[63px]" active />
        <Tab label="Navaids" className="w-[59px] border-l-0" />
      </div>
      <div className="ml-[2px] flex h-[551px] w-[621px] flex-col border border-[#8f8f8f] bg-white pt-[4px] pr-[3px] pl-[3px]">
        <div className="flex items-center">
          <Field label="ICAO Code" className="w-[133px]" />
          <Field label="Airport Name" className="ml-[6px] w-[411px]" />
          <svg className="ml-[6px] h-[18px] w-[18px]" viewBox="0 0 18 18"><circle cx="9" cy="9" r="8.500" fill="#3b7cba" stroke="#2a5f98" /><text x="9" y="13.500" fontSize="13" fill="#fff" textAnchor="middle" fontFamily="DejaVu Sans, sans-serif">?</text></svg>
          <svg className="ml-[8px] h-[20px] w-[31px]" viewBox="0 0 31 20"><rect x=".5" y=".5" width="30" height="19" rx="2.500" fill="#e6e6e6" stroke="#707070" /><path d="M6 5.500H20M6 10.500H20M6 15.500H20" stroke="#555" strokeWidth="2.400" /><path d="M22.500 14H28.500L25.500 17.500Z" fill="#000" /></svg>
        </div>
        <div className="mt-[7px] flex gap-[6px]">
          <Field label="City" className="w-[200px]" /><Field label="State / Province" className="w-[201px]" /><Field label="Country" className="w-[200px]" />
        </div>
        <Rule />
        <div className="mt-[6px]">
          {checks.map((row, i) => (
            <div key={i} className="flex h-[17px] items-center">
              {row.map((c) => (
                <div key={c.join("")} className="flex w-[122.700px] items-center gap-[5px]">
                  <div className="h-[13px] w-[13px] border border-[#8e8f8f] bg-[#e9f2f8] p-[1px]"><div className="h-full w-full border border-[#1d4f80] bg-gradient-to-br from-[#5bc0e4] to-[#1c7fb5]" /></div>
                  <span className="pt-[2px]">{c[0]}<u>{c[1]}</u>{c[2]}</span>
                </div>
              ))}
            </div>
          ))}
        </div>
        <Rule />
        <div className="mt-[7px] flex gap-[6px]">
          <Combo label="Any or no Ramp" className="w-[200px]" /><Combo label="Any or no Gate" className="w-[201px]" /><Combo label="Any or no Helipad" className="w-[200px]" />
        </div>
        <Rule />
        <div className="mt-[7px] flex items-center">
          <span className="-ml-px w-[51px] shrink-0 pt-[2px] tracking-[-0.3px]">Runways:</span>
          <U k="M" rest="in:" className="w-[27px]" />
          <Spin label="0 ft" className="w-[165px]" />
          <U k="M" rest="ax:" className="ml-[6px] w-[30px] tracking-[-0.3px]" />
          <Spin label="50.000 ft" className="w-[163px]" />
          <Combo label="Any Surface" className="ml-[7px] w-[165px]" />
        </div>
        <Rule />
        <div className="mt-[7px] flex items-center">
          <span className="-ml-px w-[45px] shrink-0 pt-[2px] tracking-[-0.3px]">Altitude:</span>
          <U k="M" rest="in:" className="w-[26px]" />
          <Spin label="-1.500 ft" className="w-[254px]" />
          <U k="M" rest="ax:" className="ml-[6px] w-[30px] tracking-[-0.3px]" />
          <Spin label="15.000 ft" className="w-[253px]" />
        </div>
        <Rule />
        <div className="mt-[7px] flex items-center">
          <div className="h-[13px] w-[13px] shrink-0 border border-[#8e8f8f] bg-gradient-to-br from-[#d5d5d5] to-white" />
          <U k="D" rest="istance" className="ml-[4px] w-[52px] tracking-[-0.2px]" />
          <span className="w-[27px] shrink-0 pt-[2px]">M<u>i</u>n:</span>
          <Spin label="0 nm" className="w-[158px]" disabled />
          <span className="ml-[6px] w-[30px] shrink-0 pt-[2px] tracking-[-0.3px]">Ma<u>x</u>:</span>
          <Spin label="100 nm" className="w-[159px]" disabled />
          <Combo label="Any Direction" className="ml-[6px] w-[158px]" disabled />
        </div>
        <Rule />
        <div className="mt-[7px] flex gap-[6px]">
          <Field label="Scenery Path" className="w-[304px]" /><Field label="Filename" className="w-[303px]" />
        </div>
        <div className="mt-[6px] flex h-[247px] shrink-0 flex-col border border-[#828790] bg-white">
          <div className="flex min-h-0 flex-1">
            <div className="w-[595px] overflow-hidden">
              <div className={`${airportCols} h-[37px] bg-gradient-to-b from-white from-40% to-[#f1f3f6] text-center leading-[40px] text-[#222]`}>
                <div className="border-r border-b border-[#dfe2e6]" />
                <div className="relative border-r border-b border-[#96d9f9] bg-gradient-to-b from-[#f0fafe] to-[#d8edf7]">
                  ICAO
                  <svg className="absolute top-[2px] left-[46px] h-[4px] w-[7px]" viewBox="0 0 8 4"><path d="M0 4L4 0L8 4Z" fill="#3c6d8c" /></svg>
                </div>
                {["Name", "City", "State", "Country"].map((h) => <div key={h} className="border-r border-b border-[#dfe2e6]">{h}</div>)}
                <div className="border-b border-[#dfe2e6] pt-[4px] pr-[2px] text-right leading-[15px] whitespace-nowrap">Scener<br />Rating</div>
              </div>
              {airports.map((r, i) => (
                <div key={r[1]} className={`${airportCols} h-[17px] leading-[19px] whitespace-nowrap ${i % 2 ? "bg-[#f5f5f5]" : "bg-white"}`}>
                  <div className="border-r border-b border-[#e2e2e2] bg-[#fafafa] pl-[3px]">{i + 1}</div>
                  <div className="flex items-center justify-between border-r border-b border-[#e2e2e2] bg-[#ececec] pr-[3px] pl-[4px]">
                    <AirportIcon kind={r[0]} />
                    <span className={`tracking-[-0.3px] ${r[5] ? "font-bold" : ""}`}>{r[1]}</span>
                  </div>
                  {[r[2], r[3], r[4], "United States"].map((t, j) => <div key={j} className="border-r border-b border-[#e2e2e2] pl-[3px] tracking-[-0.1px]">{t}</div>)}
                  <div className="border-b border-[#e2e2e2] pt-[2px] pl-[2px]"><Stars n={r[5]} size={12} /></div>
                </div>
              ))}
              <div className={`${airportCols} h-[6px] overflow-hidden bg-[#f5f5f5]`}>
                <div className="border-r border-[#e2e2e2]" />
                <div className="overflow-hidden bg-[#ececec] pt-[2px] pl-[4px]"><AirportIcon kind="o" /></div>
              </div>
            </div>
            <VBar top="mt-[6px]" size="h-[15px]" />
          </div>
          <HBar size="w-[223px]" />
        </div>
        <div className="-ml-px pt-[6px] tracking-[-0.28px]">0 of 24490 Airports selected, 256 visible.</div>
      </div>
    </section>
  );
}

/* ---------- elevation profile ---------- */

const west =
  "187,752 187,535 195,550 200,570 203,618 206,570 211,578 215,645 218,600 222,650 226,590 230,650 235,585 240,640 243,670 248,580 252,640 257,660 262,650 266,664 275,657 280,672 285,668 292,683 297,678 305,695 318,688 330,703 350,710 380,713 403,715 406,708 410,715 425,712 429,695 432,682 436,705 440,690 445,655 450,700 455,675 460,700 465,640 470,700 475,718 480,680 484,690 487,640 490,672 494,650 498,645 503,670 507,612 511,650 513,600 517,640 521,550 525,590 529,605 532,568 535,605 538,570 542,600 547,640 551,712 556,680 560,690 566,615 570,680 574,670 580,685 590,700 600,705 615,712 627,705 640,728 670,732 692,728 697,678 702,676 705,700 709,685 714,718 720,705 728,690 731,680 735,684 739,648 743,680 750,698 760,710 780,718 800,722 820,727 835,718 840,724 848,718 855,725 895,717 905,708 915,695 925,688 935,682 942,712 955,702 962,690 965,700 972,685 977,700 982,684 987,690 990,642 994,660 998,642 1003,645 1007,685 1012,670 1015,650 1020,695 1030,682 1040,672 1050,690 1060,712 1070,705 1085,710 1100,704 1115,712 1127,700 1133,688 1138,705 1145,720 1160,712 1170,710 1178,720 1188,700 1194,711 1200,708 1205,722 1212,738 1222,720 1227,738 1250,742 1280,740 1300,745 1320,738 1350,742 1357,749 1400,749 1412,743 1425,748 1568,750 1568,752";
const east =
  "0,752 0,750 90,748 285,748 289,742 293,750 400,750 460,748 463,728 467,735 470,725 473,738 475,724 477,742 480,722 484,740 488,722 490,710 494,703 497,700 500,705 503,690 506,665 509,685 513,655 517,690 522,640 526,695 531,650 536,690 541,625 544,705 549,650 554,590 556,600 558,650 560,600 563,612 565,600 568,620 572,700 576,640 578,660 580,600 583,610 585,570 588,640 590,600 592,580 594,594 596,530 600,600 603,700 606,600 609,735 612,590 614,625 616,640 620,600 624,614 627,565 630,618 632,600 634,555 637,580 640,610 643,560 646,560 651,530 655,570 659,535 662,505 665,530 668,505 674,545 680,520 682,530 686,545 690,515 694,505 696,515 698,545 700,510 702,500 706,545 709,530 711,610 714,550 719,565 719,752";

const fixes: [number, string, string][] = [
  [267, "t", "ABUKA"], [284, "t", ""], [309, "t", ""], [343, "t", ""], [366, "t", ""], [380, "t", ""], [515, "t", "GULMI"], [624, "t", "MEBUS"], [672, "t", "LUTIR"], [728, "t", ""], [832, "t", "RASVI"],
  [232, "v", "KRH"], [414, "v", "WRB"], [711, "v", "VES"], [774, "v", "RAM"], [890, "v", "SVA"],
];

const PINK = "#e010c0";
const NAVY = "#10104a";
const tags: [number, number, string, string][] = [
  [262, 37, "ABUKA", PINK], [301, 10, "ET", PINK], [312, 27, "OMBI", PINK], [342, 30, "OGMI", PINK], [375, 24, "IETU", PINK], [400, 9, "iA", PINK], [510, 34, "GULMI", PINK], [619, 35, "MEBUS", PINK],
  [668, 31, "LUTIR", PINK], [726, 33, "BAMPI", PINK], [829, 32, "RASVI", PINK], [228, 21, "KRH", NAVY], [409, 23, "WRB", NAVY], [706, 19, "VES", NAVY], [769, 24, "RAM", NAVY], [885, 21, "SVA", NAVY],
];

function Profile() {
  return (
    <svg className="ml-[2px] block h-[208px] w-[1117px]" viewBox="6 753 1117 208" fontFamily="'DejaVu Sans Condensed','DejaVu Sans',sans-serif" fontWeight="bold" fontSize="11">
      <rect x="6" y="753" width="1117" height="208" fill="#fff" />
      <rect x="71" y="753" width="986" height="208" fill="#ccccfe" />
      <g fill="green" stroke="#123d12" strokeWidth="2.600">
        <polygon points={west} transform="translate(0 710) scale(.38265 .33333)" />
        <polygon points={east} transform="translate(590 710) scale(.65 .33333)" strokeWidth="2.200" />
      </g>
      <g stroke="#a0a0a8" strokeOpacity=".62" strokeWidth="1.600">
        <path d="M71 805H1057M71 844H1057M71 883H1057M71 922H1057M71 960.500H1057M71.500 767V961M1057 767V961" />
        {fixes.map(([x]) => <path key={x} d={`M${x} 767V961`} />)}
      </g>
      <path d="M71 767H1057" stroke="#000" strokeWidth="5" />
      <path d="M71 767H1057" stroke="#fbf12a" strokeWidth="2.400" />
      <path d="M69 854H1059" stroke="#f80000" strokeWidth="4" />
      {fixes.map(([x, k]) => (k === "t" ? <Tri key={x} cx={x} cy={768} s={7} fill="#fffbd0" /> : <VorMark key={x} cx={x} cy={767} s={13.500} fill="#ffffa8" />))}
      <AirportMark cx={71} cy={767} r={5.300} angle={55} />
      <AirportMark cx={1057} cy={767} r={5.300} angle={65} color={MAROON} />
      {tags.map(([x, w, t, c]) => (
        <g key={t}>
          <rect x={x - 1} y={775.500} width={w + 2} height="11" rx="1" fill="#f6f4a4" stroke="#d9d7b4" strokeWidth=".6" />
          <text x={x} y={785} fill={c} textLength={w} lengthAdjust="spacingAndGlyphs" fontSize="10.500">{t}</text>
        </g>
      ))}
      <g fill="#f6f4a4" stroke="#d9d7b4"><rect x="66" y="777" width="29" height="13" rx="1.500" /><rect x="1052" y="777" width="28" height="13" rx="1.500" /></g>
      <text x="67" y="788" fill={BLUE} textLength="27">LSGC</text>
      <text x="1053" y="788" fill="#7a4038" textLength="26">ENDI</text>
      <g fill="#a2a2a2">
        {[["8.000", 801], ["6.000", 840], ["4.000", 879], ["2.000", 918]].map(([t, y]) => (
          <g key={t}><text x="32" y={Number(y) + 4} textLength="31" lengthAdjust="spacingAndGlyphs">{t}</text><text x="1061" y={Number(y) + 4} textLength="31" lengthAdjust="spacingAndGlyphs">{t}</text></g>
        ))}
        <text x="56" y="960.500">0</text><text x="1061" y="960.500">0</text>
      </g>
      <g fill="#fff" stroke="#d8d8d8"><rect x="11.500" y="760" width="52" height="14" rx="1.500" /><rect x="18.500" y="847" width="45" height="14" rx="1.500" /><rect x="18.500" y="883" width="45" height="14" rx="1.500" /><rect x="1060" y="898" width="45" height="14" rx="1.500" /></g>
      <text x="13" y="772" textLength="50">10.000 ft</text>
      <text x="20" y="859" textLength="43" fill="#e00012">5.500 ft</text>
      <text x="20" y="895" textLength="43">3.366 ft</text>
      <text x="1061" y="910" textLength="43">2.618 ft</text>
    </svg>
  );
}

/* ---------- window ---------- */

const menus: [string, string, string, string][] = [
  ["", "F", "ile", "w-[34px]"], ["Flight ", "P", "lan", "w-[72px]"], ["", "M", "ap", "w-[40px]"], ["", "S", "cenery Library", "w-[96px]"], ["", "T", "ools", "w-[45px]"], ["", "W", "indow", "w-[60px]"], ["", "H", "elp", "w-[40px]"],
];

export default function App() {
  return (
    <div className="flex h-[987px] w-[1608px] flex-col overflow-hidden border-x-4 border-black bg-[#f0f0f0] font-['DejaVu_Sans_Condensed','DejaVu_Sans',sans-serif] text-[11px] leading-[14px] tracking-[-0.2px] text-[#111]">
      <div className="flex h-[21px] shrink-0 justify-between bg-gradient-to-b from-[#99b4d1] to-[#b9d1ea] pl-[3px]">
        <div className="flex items-center gap-[8px]">
          <svg className="h-[15px] w-[15px]" viewBox="0 0 15 15"><circle cx="7.500" cy="7.500" r="6.500" fill="#6f94b8" stroke="#51708f" /><path d="M3 4L7 2L8 5L5 8L3 7ZM9 6L13 5V9L10 12Z" fill="#dbe8ef" /></svg>
          <span className="font-['Noto_Sans',sans-serif] text-[12px] tracking-[-0.3px]">Little Navmap - FSX - IFR Les Eplatures (LSGC) to Dagali (ENDI).pln *</span>
        </div>
        <div className="flex gap-[2px] pt-px pr-[4px]">
          <div className="flex h-[17px] w-[29px] items-end justify-center rounded-b-[3px] border border-[#5f7891] bg-gradient-to-b from-[#dbe7f3] to-[#a9c0d9] pb-[4px]"><div className="h-[4px] w-[12px] border border-[#444] bg-white" /></div>
          <svg className="h-[17px] w-[29px]" viewBox="0 0 29 17"><rect x=".5" y=".5" width="28" height="16" rx="2" fill="#bccfe3" stroke="#5f7891" /><rect x="12" y="4" width="8" height="6" fill="#fff" stroke="#444" /><rect x="9" y="7" width="8" height="6" fill="#fff" stroke="#444" /></svg>
          <svg className="h-[17px] w-[31px]" viewBox="0 0 31 17"><rect x=".5" y=".5" width="30" height="16" rx="2" fill="#c9584a" stroke="#6b2a22" /><path d="M12 5L19 12M19 5L12 12" stroke="#fff" strokeWidth="2.400" /></svg>
        </div>
      </div>
      <div className="flex h-[20px] shrink-0 items-center bg-gradient-to-b from-white from-30% via-[#d6dcee] via-45% to-[#e6e9f6] pl-[8px] font-['Noto_Sans',sans-serif] text-[12px] tracking-[-0.2px]">
        {menus.map((m) => <div key={m.join("")} className={`pt-[2px] whitespace-nowrap ${m[3]}`}>{m[0]}<u>{m[1]}</u>{m[2]}</div>)}
      </div>
      <ToolbarTop />
      <ToolbarBottom />
      <div className="flex h-[606px] shrink-0">
        <div className="flex w-[357px] shrink-0 flex-col pt-[3px]">
          <FlightPlan />
          <Information />
        </div>
        <main className="shrink-0 pt-[12px] pl-[15px]"><AirportMap /></main>
        <div className="w-[15px] shrink-0" />
        <Search />
      </div>
      <div className="flex h-[246px] shrink-0 pt-px">
        <section className="w-[1121px] shrink-0">
          <DockTitle title="Flight Plan Profile" />
          <div className="h-[18px] pt-[3px] pl-[2px] text-[11.500px] font-bold tracking-[-0.4px]">No information.</div>
          <Profile />
        </section>
        <section className="ml-[4px] flex w-[475px] flex-col">
          <DockTitle title="Simulator Aircraft" />
          <div className="mt-[3px] ml-[2px] flex items-end">
            <Tab label="Aircraft" className="w-[61px]" active />
            <Tab label="Progress" className="w-[62px] border-l-0" />
          </div>
          <div className="ml-[2px] h-[202px] w-[470px] border border-[#8f8f8f] bg-white p-[3px]">
            <div className="h-[194px] border border-[#e0e3e8] border-t-[#abadb3] pt-[4px] pl-[3px] text-[#7a7a7a]">Not connected to Simulator.</div>
          </div>
        </section>
      </div>
      <div className="flex h-[22px] shrink-0 items-center pt-[5px] text-[11.500px] tracking-[-0.3px]">
        <div className="w-[1077px] shrink-0 pl-[975px] whitespace-nowrap">AP,VOR,NDB,ILS,W</div>
        <div className="h-4 w-[106px] border-l border-[#d8d8d8] pl-[3px]">Detail Normal</div>
        <div className="h-4 w-[126px] border-l border-[#d8d8d8] pl-[3px]">Done.</div>
        <div className="h-4 w-[86px] border-l border-[#d8d8d8] pl-[17px]">0,5 nm</div>
        <div className="h-4 border-l border-[#d8d8d8] pl-[4px]">not available</div>
      </div>
      <div className="h-[4px] shrink-0 border-t border-[#3d5168] bg-gradient-to-r from-[#9cb6d2] via-[#c4d6ea] to-[#5d7b9c]" />
    </div>
  );
}
